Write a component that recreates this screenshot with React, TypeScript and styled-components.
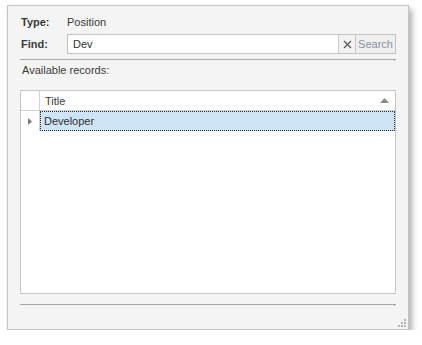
import React from "react";
import styled, { createGlobalStyle } from "styled-components";

const Global = createGlobalStyle`
  html, body { margin: 0; padding: 0; background: #ffffff; }
  body { font-family: "Liberation Sans", Arial, sans-serif; font-size: 11px; color: #3b3b3b; }
`;

const Dialog = styled.div`
  position: relative;
  box-sizing: border-box;
  margin: 5px 0 0 7px;
  width: 402px;
  height: 325px;
  background: #f4f4f4;
  border: 1px solid #c4c4c4;
  box-shadow: 3px 4px 6px rgba(0, 0, 0, 0.32);
  padding: 6px 12px 0 12px;
  display: flex;
  flex-direction: column;
`;

const FieldRow = styled.div<{ $top?: number }>`
  display: flex;
  align-items: center;
  height: 20px;
  margin-top: ${(p) => p.$top ?? 0}px;
`;

const Label = styled.div`
  width: 47px;
  padding-left: 1px;
  box-sizing: border-box;
  font-weight: bold;
  color: #3a3a3a;
`;

const Value = styled.div`
  color: #3a3a3a;
`;

const SearchBox = styled.div`
  flex: 1;
  display: flex;
  height: 20px;
  box-sizing: border-box;
  border: 1px solid #c2c2c2;
  background: #ffffff;
`;

const Input = styled.div`
  flex: 1;
  display: flex;
  align-items: center;
  padding-left: 5px;
  color: #333333;
`;

const ClearButton = styled.div`
  width: 16px;
  display: flex;
  align-items: center;
  justify-content: center;
  border-left: 1px solid #c8c8c8;
  background: #f2f2f2;
`;

const SearchButton = styled.div`
  width: 39px;
  display: flex;
  align-items: center;
  justify-content: center;
  border-left: 1px solid #c8c8c8;
  background: #efefef;
  color: #8c9099;
`;

const Separator = styled.div<{ $top: number }>`
  position: relative;
  height: 1px;
  margin-top: ${(p) => p.$top}px;
  background: #a6a6a6;
  &::after {
    content: "";
    position: absolute;
    right: 1px;
    top: 1px;
    width: 1px;
    height: 1px;
    background: #a6a6a6;
  }
`;

const Caption = styled.div`
  margin-top: 2px;
  height: 16px;
  line-height: 16px;
  padding-left: 2px;
  color: #3a3a3a;
`;

const Grid = styled.div`
  margin-top: 12px;
  height: 204px;
  box-sizing: border-box;
  border: 1px solid #c4c4c4;
  background: #ffffff;
  display: flex;
  flex-direction: column;
`;

const GridRow = styled.div<{ $header?: boolean }>`
  display: flex;
  height: 20px;
  box-sizing: border-box;
  border-bottom: ${(p) => (p.$header ? "1px solid #d2d2d2" : "none")};
`;

const Indicator = styled.div`
  width: 18px;
  flex: none;
  border-right: 1px solid #d2d2d2;
  display: flex;
  align-items: center;
  justify-content: center;
`;

const HeaderCell = styled.div`
  flex: 1;
  display: flex;
  align-items: center;
  justify-content: space-between;
  padding: 0 6px 0 5px;
  color: #3a3a3a;
`;

const DataCell = styled.div`
  flex: 1;
  display: flex;
  align-items: center;
  padding-left: 3px;
  box-sizing: border-box;
  background: #cde5f7;
  border: 1px dotted #2a2a2a;
  color: #2e2e2e;
`;

const Grip = styled.svg`
  position: absolute;
  right: 1px;
  bottom: 1px;
`;

export default function App() {
  return (
    <>
      <Global />
      <Dialog>
        <FieldRow>
          <Label>Type:</Label>
          <Value>Position</Value>
        </FieldRow>
        <FieldRow $top={2}>
          <Label>Find:</Label>
          <SearchBox>
            <Input>Dev</Input>
            <ClearButton>
              <svg width="9" height="9" viewBox="0 0 9 9">
                <path d="M1 1 L8 8 M8 1 L1 8" stroke="#5a5a5a" strokeWidth="1.3" />
              </svg>
            </ClearButton>
            <SearchButton>Search</SearchButton>
          </SearchBox>
        </FieldRow>
        <Separator $top={5} />
        <Caption>Available records:</Caption>
        <Grid>
          <GridRow $header>
            <Indicator />
            <HeaderCell>
              <span>Title</span>
              <svg width="9" height="5" viewBox="0 0 9 5">
                <path d="M0 5 L4.5 0 L9 5 Z" fill="#8a8a8a" />
              </svg>
            </HeaderCell>
          </GridRow>
          <GridRow>
            <Indicator>
              <svg width="4" height="7" viewBox="0 0 4 7">
                <path d="M0 0 L4 3.5 L0 7 Z" fill="#7a7a7a" />
              </svg>
            </Indicator>
            <DataCell>Developer</DataCell>
          </GridRow>
        </Grid>
        <Separator $top={10} />
        <Grip width="10" height="10" viewBox="0 0 10 10">
          <g fill="#b4b4b4">
            <rect x="7" y="1" width="2" height="2" />
            <rect x="4" y="4" width="2" height="2" />
            <rect x="7" y="4" width="2" height="2" />
            <rect x="1" y="7" width="2" height="2" />
            <rect x="4" y="7" width="2" height="2" />
            <rect x="7" y="7" width="2" height="2" />
          </g>
        </Grip>
      </Dialog>
    </>
  );
}
